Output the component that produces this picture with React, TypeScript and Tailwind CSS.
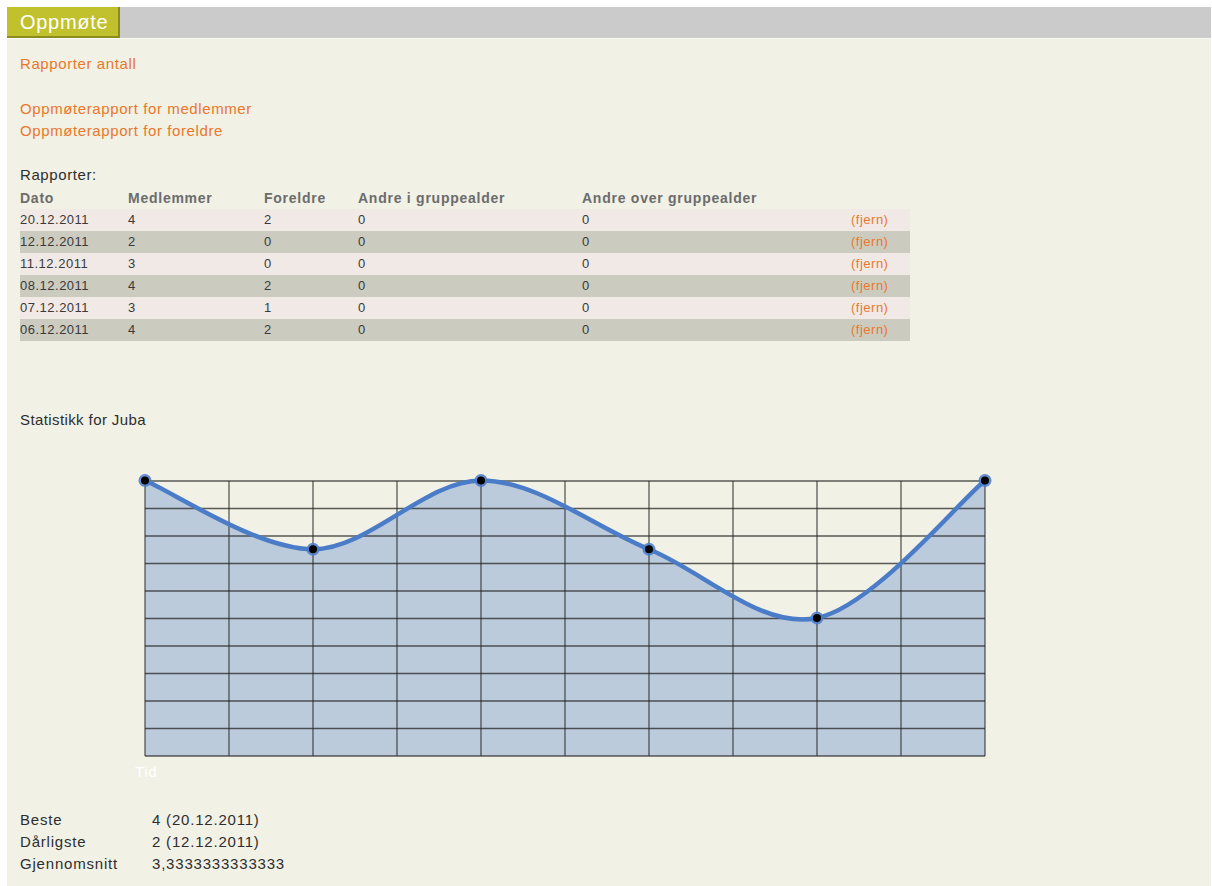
import React from "react";

type Report = {
  date: string;
  members: number;
  parents: number;
  othersIn: number;
  othersOver: number;
};

const reports: Report[] = [
  { date: "20.12.2011", members: 4, parents: 2, othersIn: 0, othersOver: 0 },
  { date: "12.12.2011", members: 2, parents: 0, othersIn: 0, othersOver: 0 },
  { date: "11.12.2011", members: 3, parents: 0, othersIn: 0, othersOver: 0 },
  { date: "08.12.2011", members: 4, parents: 2, othersIn: 0, othersOver: 0 },
  { date: "07.12.2011", members: 3, parents: 1, othersIn: 0, othersOver: 0 },
  { date: "06.12.2011", members: 4, parents: 2, othersIn: 0, othersOver: 0 },
];

const rowCols = "grid grid-cols-[108px_136px_94px_224px_269px_59px]";

// chart geometry
const LEFT = 10;
const TOP = 11;
const COL_W = 84;
const ROW_H = 27.5;
const COLS = 10;
const ROWS = 10;
const MAX = 4;
const BOTTOM = TOP + ROW_H * ROWS;
const RIGHT = LEFT + COL_W * COLS;

function toPoint(value: number, i: number, count: number) {
  const x = LEFT + ((RIGHT - LEFT) / (count - 1)) * i;
  const y = TOP - 0.5 + ((MAX - value) / MAX) * (BOTTOM - TOP);
  return { x, y };
}

// catmull-rom through the points, as cubic beziers
function smoothPath(pts: { x: number; y: number }[]) {
  let d = `M ${pts[0].x} ${pts[0].y}`;
  for (let i = 0; i < pts.length - 1; i++) {
    const p0 = pts[i - 1] ?? pts[i];
    const p1 = pts[i];
    const p2 = pts[i + 1];
    const p3 = pts[i + 2] ?? p2;
    const c1x = p1.x + (p2.x - p0.x) / 6;
    const c1y = p1.y + (p2.y - p0.y) / 6;
    const c2x = p2.x - (p3.x - p1.x) / 6;
    const c2y = p2.y - (p3.y - p1.y) / 6;
    d += ` C ${c1x} ${c1y}, ${c2x} ${c2y}, ${p2.x} ${p2.y}`;
  }
  return d;
}

function AttendanceChart({ values }: { values: number[] }) {
  const pts = values.map((v, i) => toPoint(v, i, values.length));
  const line = smoothPath(pts);
  const area = `${line} L ${RIGHT} ${BOTTOM} L ${LEFT} ${BOTTOM} Z`;

  return (
    <svg width={860} height={315} className="block">
      <path d={area} fill="#bccbdb" />
      <g stroke="#262626" strokeOpacity={0.75} strokeWidth={1.3}>
        {Array.from({ length: COLS + 1 }, (_, i) => (
          <line
            key={`v${i}`}
            x1={LEFT + COL_W * i}
            x2={LEFT + COL_W * i}
            y1={TOP}
            y2={BOTTOM}
          />
        ))}
        {Array.from({ length: ROWS + 1 }, (_, i) => (
          <line
            key={`h${i}`}
            x1={LEFT}
            x2={RIGHT}
            y1={TOP + ROW_H * i}
            y2={TOP + ROW_H * i}
          />
        ))}
      </g>
      <path
        d={line}
        fill="none"
        stroke="#4a7cc8"
        strokeWidth={4.5}
        strokeLinecap="round"
      />
      {pts.map((p, i) => (
        <g key={i}>
          <circle cx={p.x} cy={p.y} r={6.5} fill="#4a7cc8" opacity={0.85} />
          <circle cx={p.x} cy={p.y} r={4} fill="#000" />
        </g>
      ))}
      <text
        x={0}
        y={307}
        fill="#ffffff"
        fontSize={15}
        fontFamily="'Liberation Sans', Arial, sans-serif"
      >
        Tid
      </text>
    </svg>
  );
}

export default function App() {
  const chronological = [...reports].reverse().map((r) => r.members);

  return (
    <div className="min-h-[886px] bg-white pt-[7px] pl-[7px] pr-[1px] font-['Liberation_Sans',Arial,sans-serif]">
      <div className="flex h-[31px] bg-[#cbcbcb]">
        <div className="flex w-[113px] items-center border-r-2 border-b-2 border-[#8c8c1e] bg-[#c1c12e] pl-[13px] text-[20px] tracking-[0.7px] text-white">
          Oppmøte
        </div>
      </div>
      <div className="border-t border-[#fafaf4] bg-[#f1f1e6] pt-[14px] pb-[11px] pl-[13px] text-[15px] leading-[22px] tracking-[0.6px] text-[#2e2e2e]">
        <a className="block w-fit text-[#e9782b]">Rapporter antall</a>
        <div className="h-[22px]" />
        <a className="mt-px block w-fit text-[#e9782b]">Oppmøterapport for medlemmer</a>
        <a className="block w-fit text-[#e9782b]">Oppmøterapport for foreldre</a>

        <p className="mt-[22px]">Rapporter:</p>
        <div className="w-[890px] text-[13px] tracking-[0.5px]">
          <div className={`${rowCols} h-[23px] items-center text-[14px] font-bold tracking-[0.75px] text-[#6c6c6c]`}>
            <span>Dato</span>
            <span>Medlemmer</span>
            <span>Foreldre</span>
            <span>Andre i gruppealder</span>
            <span>Andre over gruppealder</span>
            <span />
          </div>
          {reports.map((r, i) => (
            <div
              key={r.date}
              className={`${rowCols} h-[22px] items-center text-[#3a3a3a] ${
                i % 2 === 0 ? "bg-[#f1e9e6]" : "bg-[#cbcbc0]"
              }`}
            >
              <span>{r.date}</span>
              <span>{r.members}</span>
              <span>{r.parents}</span>
              <span>{r.othersIn}</span>
              <span>{r.othersOver}</span>
              <a className="text-[#e9782b]">(fjern)</a>
            </div>
          ))}
        </div>

        <p className="mt-[68px] tracking-[0.4px]">Statistikk for Juba</p>
        <div className="mt-[39px] ml-[115px]">
          <AttendanceChart values={chronological} />
        </div>

        <div className="mt-[24px] grid grid-cols-[132px_1fr] tracking-[0.8px]">
          <span>Beste</span>
          <span>4 (20.12.2011)</span>
          <span>Dårligste</span>
          <span>2 (12.12.2011)</span>
          <span>Gjennomsnitt</span>
          <span>3,3333333333333</span>
        </div>
      </div>
    </div>
  );
}
